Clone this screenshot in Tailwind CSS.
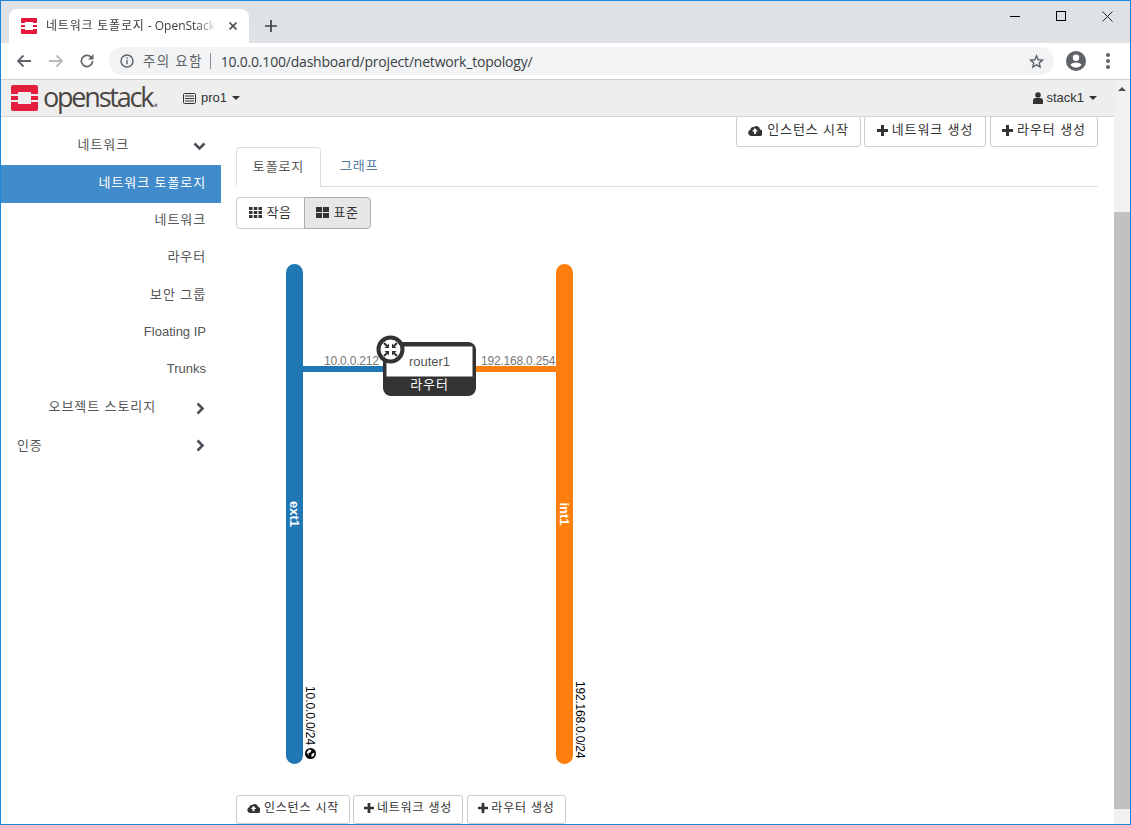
<!doctype html>
<html lang="ko"><head><meta charset="utf-8">
<script src="https://cdn.jsdelivr.net/npm/@tailwindcss/browser@4"></script>
</head>
<body class="bg-white overflow-hidden">
<div class="w-[1131px] h-[825px] border border-[#1a86d9] flex flex-col overflow-hidden font-['Liberation_Sans','Noto_Sans_CJK_KR',sans-serif] text-[13px] text-[#333] box-border">
  <!-- tab strip -->
  <div class="h-[42px] shrink-0 bg-[#dee1e6] flex items-start relative">
    <div class="ml-[8px] mt-[8px] w-[240px] h-[34px] bg-white rounded-t-[8px] flex items-center pl-[12px]">
      <svg width="16" height="16" viewBox="0 0 16 16" class="shrink-0"><path fill="#e8163c" d="M1 0h14a1 1 0 0 1 1 1v4h-4V4H4v1H0V1a1 1 0 0 1 1-1zM0 7h4v2H0zM12 7h4v2h-4zM0 11h4v1h8v-1h4v4a1 1 0 0 1-1 1H1a1 1 0 0 1-1-1z"/></svg>
      <span class="ml-[9px] w-[171px] shrink-0 overflow-hidden whitespace-nowrap text-[12px] text-[#3c4043] font-['Open_Sans','Noto_Sans_CJK_KR',sans-serif] [mask-image:linear-gradient(to_right,black_88%,transparent)]"><span class="tracking-[0.8px]">네트워크 토폴로지</span> - OpenStack</span>
      <svg width="10" height="10" viewBox="0 0 10 10" class="ml-[11px] shrink-0"><path d="M1.5 1.5l7 7M8.5 1.5l-7 7" stroke="#45484c" stroke-width="1.7"/></svg>
    </div>
    <svg width="14" height="14" viewBox="0 0 14 14" class="ml-[15px] mt-[18px]"><path d="M7 1v12M1 7h12" stroke="#3c4043" stroke-width="1.7"/></svg>
    <div class="ml-auto flex items-start mt-[1px]">
      <div class="w-[46px] h-[28px] flex items-center justify-center"><span class="w-[10px] h-px bg-black"></span></div>
      <div class="w-[46px] h-[28px] flex items-center justify-center"><span class="w-[10px] h-[10px] border border-black"></span></div>
      <div class="w-[46px] h-[28px] flex items-center justify-center"><svg width="11" height="11" viewBox="0 0 11 11"><path d="M.5.5l10 10M10.5.5l-10 10" stroke="#222" stroke-width="1"/></svg></div>
    </div>
  </div>
  <!-- toolbar -->
  <div class="h-[37px] shrink-0 bg-white flex items-center border-b border-[#d0d1d3]">
    <svg width="16" height="14" viewBox="0 0 16 14" class="ml-[15px]"><path d="M15 7H2M7.5 1.5L2 7l5.5 5.5" fill="none" stroke="#5f6368" stroke-width="1.8"/></svg>
    <svg width="16" height="14" viewBox="0 0 16 14" class="ml-[16px]"><path d="M1 7h13M8.5 1.5L14 7l-5.5 5.5" fill="none" stroke="#b8babd" stroke-width="1.8"/></svg>
    <svg width="16" height="16" viewBox="0 0 16 16" class="ml-[15px]"><path d="M13.6 8a5.6 5.6 0 1 1-1.6-4" fill="none" stroke="#5f6368" stroke-width="1.7"/><path d="M14.5 1v5.5H9z" fill="#5f6368"/></svg>
    <div class="ml-[14px] w-[945px] h-[28px] rounded-full bg-[#f1f3f4] flex items-center pl-[11px] font-['Open_Sans','Noto_Sans_CJK_KR',sans-serif]">
      <svg width="14" height="14" viewBox="0 0 14 14"><circle cx="7" cy="7" r="6" fill="none" stroke="#5f6368" stroke-width="1.4"/><path d="M7 6v4.2M7 3.4v1.5" stroke="#5f6368" stroke-width="1.4"/></svg>
      <span class="ml-[9px] text-[13.5px] text-[#5f6368] tracking-[1.3px]">주의 요함</span>
      <span class="ml-[7px] w-px h-[16px] bg-[#8b8e92]"></span>
      <span class="ml-[10px] text-[14px] text-[#3c4043] tracking-[-0.2px]">10.0.0.100/dashboard/project/network_topology/</span>
      <svg width="15" height="15" viewBox="0 0 24 24" class="ml-auto mr-[10px]"><path d="M12 3l2.7 6.2 6.8.6-5.1 4.5 1.5 6.6L12 17.4l-5.9 3.5 1.5-6.6-5.1-4.5 6.8-.6z" fill="none" stroke="#5f6368" stroke-width="2.2"/></svg>
    </div>
    <svg width="20" height="20" viewBox="0 0 20 20" class="ml-[12px]"><path fill="#5f6368" fill-rule="evenodd" d="M10 0a10 10 0 1 1 0 20a10 10 0 0 1 0-20zM10 3.5a3.2 3.2 0 1 0 0 6.4a3.2 3.2 0 0 0 0-6.4zM10 11.5c-2.6 0-5 1-5.500 2.600a7 7 0 0 0 11 0c-.5-1.600-2.900-2.600-5.500-2.600z"/></svg>
    <span class="ml-[20px] flex flex-col gap-[2px]"><i class="block w-[4px] h-[4px] rounded-full bg-[#5f6368]"></i><i class="block w-[4px] h-[4px] rounded-full bg-[#5f6368]"></i><i class="block w-[4px] h-[4px] rounded-full bg-[#5f6368]"></i></span>
  </div>
  <!-- main -->
  <div class="flex-1 flex min-h-0">
    <div class="flex-1 flex flex-col min-w-0">
      <!-- navbar -->
      <div class="h-[37px] shrink-0 bg-[#eeeeee] border-b border-[#d4d4d4] flex items-center">
        <svg width="27" height="26" viewBox="0 0 27 26" class="ml-[10px]"><path fill="#e41e3e" d="M2 0h23a2 2 0 0 1 2 2v7h-7V7H7v2H0V2a2 2 0 0 1 2-2zM0 11h7v4H0zM20 11h7v4h-7zM0 17h7v2h13v-2h7v7a2 2 0 0 1-2 2H2a2 2 0 0 1-2-2z"/></svg>
        <span class="ml-[5px] w-[115px] whitespace-nowrap text-[27px] leading-none text-[#4a4542] font-medium font-['Open_Sans',sans-serif] tracking-[-2.2px] -mt-[3px]">openstack<span class="text-[#8b8785]">.</span></span>
        <svg width="13" height="11" viewBox="0 0 13 11" class="ml-[25px]"><rect x=".5" y=".5" width="12" height="10" rx="1" fill="none" stroke="#333"/><path d="M2 3h9M2 5.500h9M2 8h9" stroke="#333"/></svg>
        <span class="ml-[5px] text-[#333]">pro1</span>
        <span class="ml-[5px] w-0 h-0 border-x-[4px] border-x-transparent border-t-[4px] border-t-[#333]"></span>
        <svg width="10" height="12" viewBox="0 0 10 12" class="ml-auto"><circle cx="5" cy="3" r="2.8" fill="#333"/><path d="M0 12V8.500C0 6.800 1.400 6 2.500 6h5C8.600 6 10 6.800 10 8.500V12z" fill="#333"/></svg>
        <span class="ml-[3px] text-[#333]">stack1</span>
        <span class="ml-[5px] mr-[17px] w-0 h-0 border-x-[4px] border-x-transparent border-t-[4px] border-t-[#333]"></span>
      </div>
      <div class="flex-1 flex min-h-0 overflow-hidden">
        <!-- sidebar -->
        <nav class="w-[220px] shrink-0 pt-[8px] text-[#555] tracking-[0.9px]">
          <div class="h-[40px] flex items-center justify-end pr-[15px]"><span class="mr-[64px]">네트워크</span><svg width="13" height="9" viewBox="0 0 13 9" class="translate-y-[1px]"><path d="M1.500 1.500l5 5 5-5" fill="none" stroke="#4c5058" stroke-width="2.600"/></svg></div>
          <div class="h-[38px] pb-[2px] bg-[#428bca] text-white flex items-center justify-end pr-[15px]">네트워크 토폴로지</div>
          <div class="h-[37px] pb-[3px] flex items-center justify-end pr-[15px]">네트워크</div>
          <div class="h-[37px] pb-[3px] flex items-center justify-end pr-[15px]">라우터</div>
          <div class="h-[37px] pb-[1px] flex items-center justify-end pr-[15px]">보안 그룹</div>
          <div class="h-[38px] pb-[3px] flex items-center justify-end pr-[15px] tracking-normal">Floating IP</div>
          <div class="h-[37px] pb-[3px] flex items-center justify-end pr-[15px] tracking-normal">Trunks</div>
          <div class="h-[38px] pb-[3px] flex items-center justify-end pr-[16px]"><span class="mr-[40px]">오브젝트 스토리지</span><svg width="9" height="13" viewBox="0 0 9 13" class="translate-y-[2px]"><path d="M1.500 1.500l5 5-5 5" fill="none" stroke="#4c5058" stroke-width="2.600"/></svg></div>
          <div class="h-[37px] flex items-center pl-[16px] pr-[16px]"><span>인증</span><svg width="9" height="13" viewBox="0 0 9 13" class="ml-auto"><path d="M1.500 1.500l5 5-5 5" fill="none" stroke="#4c5058" stroke-width="2.600"/></svg></div>
        </nav>
        <!-- content -->
        <div class="flex-1 min-w-0 pl-[15px] pr-[16px] relative">
          <div class="flex justify-end gap-[3px] h-[30px] tracking-[0.9px]">
            <button class="w-[125px] h-[31px] -mt-px pb-[3px] border border-[#ccc] rounded-[3px] bg-white flex items-center justify-center gap-[5px]"><svg width="14" height="11" viewBox="0 0 14 11"><path fill="#333" fill-rule="evenodd" d="M3.200 11A3.200 3.200 0 0 1 2.300 4.800a2.600 2.600 0 0 1 3.300-2.600A3.700 3.700 0 0 1 12 4.500 3.200 3.200 0 0 1 11 11zM7 3L4 6.500h2V9h2V6.500h2z"/></svg>인스턴스 시작</button>
            <button class="w-[122px] h-[31px] -mt-px pb-[3px] border border-[#ccc] rounded-[3px] bg-white flex items-center justify-center gap-[4px]"><svg width="11" height="11" viewBox="0 0 11 11"><path d="M5.500 0v11M0 5.500h11" stroke="#333" stroke-width="3"/></svg>네트워크 생성</button>
            <button class="ml-px w-[108px] h-[31px] -mt-px pb-[3px] border border-[#ccc] rounded-[3px] bg-white flex items-center justify-center gap-[4px]"><svg width="11" height="11" viewBox="0 0 11 11"><path d="M5.500 0v11M0 5.500h11" stroke="#333" stroke-width="3"/></svg>라우터 생성</button>
          </div>
          <div class="h-[40px] border-b border-[#ddd] flex tracking-[0.9px]">
            <div class="w-[85px] h-[40px] bg-white border border-[#ddd] border-b-white rounded-t-[4px] flex items-center justify-center text-[#555]">토폴로지</div>
            <div class="ml-[19px] h-[38px] flex items-center text-[#4f7aa0]">그래프</div>
          </div>
          <div class="mt-[10px] flex h-[32px] tracking-[0.6px]">
            <div class="w-[69px] pb-[1px] border border-[#ccc] rounded-l-[4px] bg-white flex items-center justify-center gap-[4px]"><svg width="13" height="11" viewBox="0 0 13 11"><path fill="#333" d="M0 0h3.500v3H0zM4.750 0h3.500v3h-3.500zM9.500 0H13v3H9.500zM0 4h3.500v3H0zM4.750 4h3.500v3h-3.500zM9.500 4H13v3H9.500zM0 8h3.500v3H0zM4.750 8h3.500v3h-3.500zM9.500 8H13v3H9.500z"/></svg>작음</div>
            <div class="-ml-px w-[67px] pb-[1px] border border-[#adadad] rounded-r-[4px] bg-[#e6e6e6] flex items-center justify-center gap-[4px]"><svg width="13" height="11" viewBox="0 0 13 11"><path fill="#333" d="M0 0h6v5H0zM7 0h6v5H7zM0 6h6v5H0zM7 6h6v5H7z"/></svg>표준</div>
          </div>
          <!-- topology canvas -->
          <div class="relative h-[566px] -ml-[15px]">
            <svg width="640" height="566" viewBox="0 0 640 566" class="absolute left-0 top-0 font-['Liberation_Sans','Noto_Sans_CJK_KR',sans-serif]">
              <g transform="translate(-221,-229)">
                <rect x="286" y="264" width="17" height="500" rx="8.500" fill="#1f77b4"/>
                <rect x="556" y="264" width="17" height="500" rx="8.500" fill="#ff7f0e"/>
                <rect x="303" y="366" width="85" height="6" fill="#1f77b4"/>
                <rect x="472" y="366" width="85" height="6" fill="#ff7f0e"/>
                <text x="324" y="365" font-size="12" fill="#777" letter-spacing="-0.2">10.0.0.212</text>
                <text x="481" y="365" font-size="12" fill="#777" letter-spacing="-0.2">192.168.0.254</text>
                <rect x="383" y="342" width="93" height="54" rx="8" fill="#333"/>
                <rect x="386.500" y="346.500" width="86" height="30" fill="#fff"/>
                <text x="429.500" y="366" font-size="13" fill="#555" text-anchor="middle">router1</text>
                <text x="429.500" y="389" font-size="13" fill="#fff" text-anchor="middle" letter-spacing="0.8">라우터</text>
                <circle cx="390.500" cy="349.500" r="12" fill="#fff" stroke="#333" stroke-width="4"/>
                <path fill="none" stroke="#333" stroke-width="2" d="M384 343l3 3M397 343l-3 3M384 356l3-3M397 356l-3-3"/>
                <path fill="#333" d="M389 348v-4.500l-4.500 4.500zM392 348h4.500l-4.500-4.500zM389 351h-4.500l4.500 4.500zM392 351v4.500l4.500-4.500z"/>
                <text transform="translate(290,514) rotate(90)" font-size="13" font-weight="700" fill="#fff" text-anchor="middle">ext1</text>
                <text transform="translate(560,514) rotate(90)" font-size="13" font-weight="700" fill="#fff" text-anchor="middle">int1</text>
                <text transform="translate(305.500,686) rotate(90)" font-size="12" fill="#000" letter-spacing="-0.1">10.0.0.0/24</text>
                <text transform="translate(576,681) rotate(90)" font-size="12" fill="#000" letter-spacing="-0.2">192.168.0.0/24</text>
                <circle cx="310.500" cy="753.500" r="5.500" fill="#000"/>
                <path d="M306.500 752.500l2.500-3 2.500.5-1 2.500-2 .5 .5 2.500zM311.500 754l3-1.500-.5 3-2.500 2z" fill="#fff"/>
              </g>
            </svg>
          </div>
          <div class="flex h-[29px] text-[12px] tracking-[0.8px]">
            <button class="w-[114px] pb-[3px] border border-[#ccc] rounded-[3px] bg-white flex items-center justify-center gap-[4px]"><svg width="13" height="10" viewBox="0 0 14 11"><path fill="#333" fill-rule="evenodd" d="M3.200 11A3.200 3.200 0 0 1 2.300 4.800a2.600 2.600 0 0 1 3.300-2.600A3.700 3.700 0 0 1 12 4.500 3.200 3.200 0 0 1 11 11zM7 3L4 6.500h2V9h2V6.500h2z"/></svg>인스턴스 시작</button>
            <button class="ml-[3px] w-[110px] pb-[3px] border border-[#ccc] rounded-[3px] bg-white flex items-center justify-center gap-[3px]"><svg width="10" height="10" viewBox="0 0 11 11"><path d="M5.500 0v11M0 5.500h11" stroke="#333" stroke-width="3"/></svg>네트워크 생성</button>
            <button class="ml-[4px] w-[99px] pb-[3px] border border-[#ccc] rounded-[3px] bg-white flex items-center justify-center gap-[3px]"><svg width="10" height="10" viewBox="0 0 11 11"><path d="M5.500 0v11M0 5.500h11" stroke="#333" stroke-width="3"/></svg>라우터 생성</button>
          </div>
        </div>
      </div>
    </div>
    <!-- scrollbar -->
    <div class="w-[16px] shrink-0 bg-[#f1f1f1] flex flex-col items-center">
      <div class="h-[17px] w-full flex items-center justify-center"><span class="w-0 h-0 border-x-[4px] border-x-transparent border-b-[4px] border-b-[#505050]"></span></div>
      <div class="mt-[115px] w-full h-[597px] bg-[#c1c1c1]"></div>
    </div>
  </div>
</div>
</body></html>
